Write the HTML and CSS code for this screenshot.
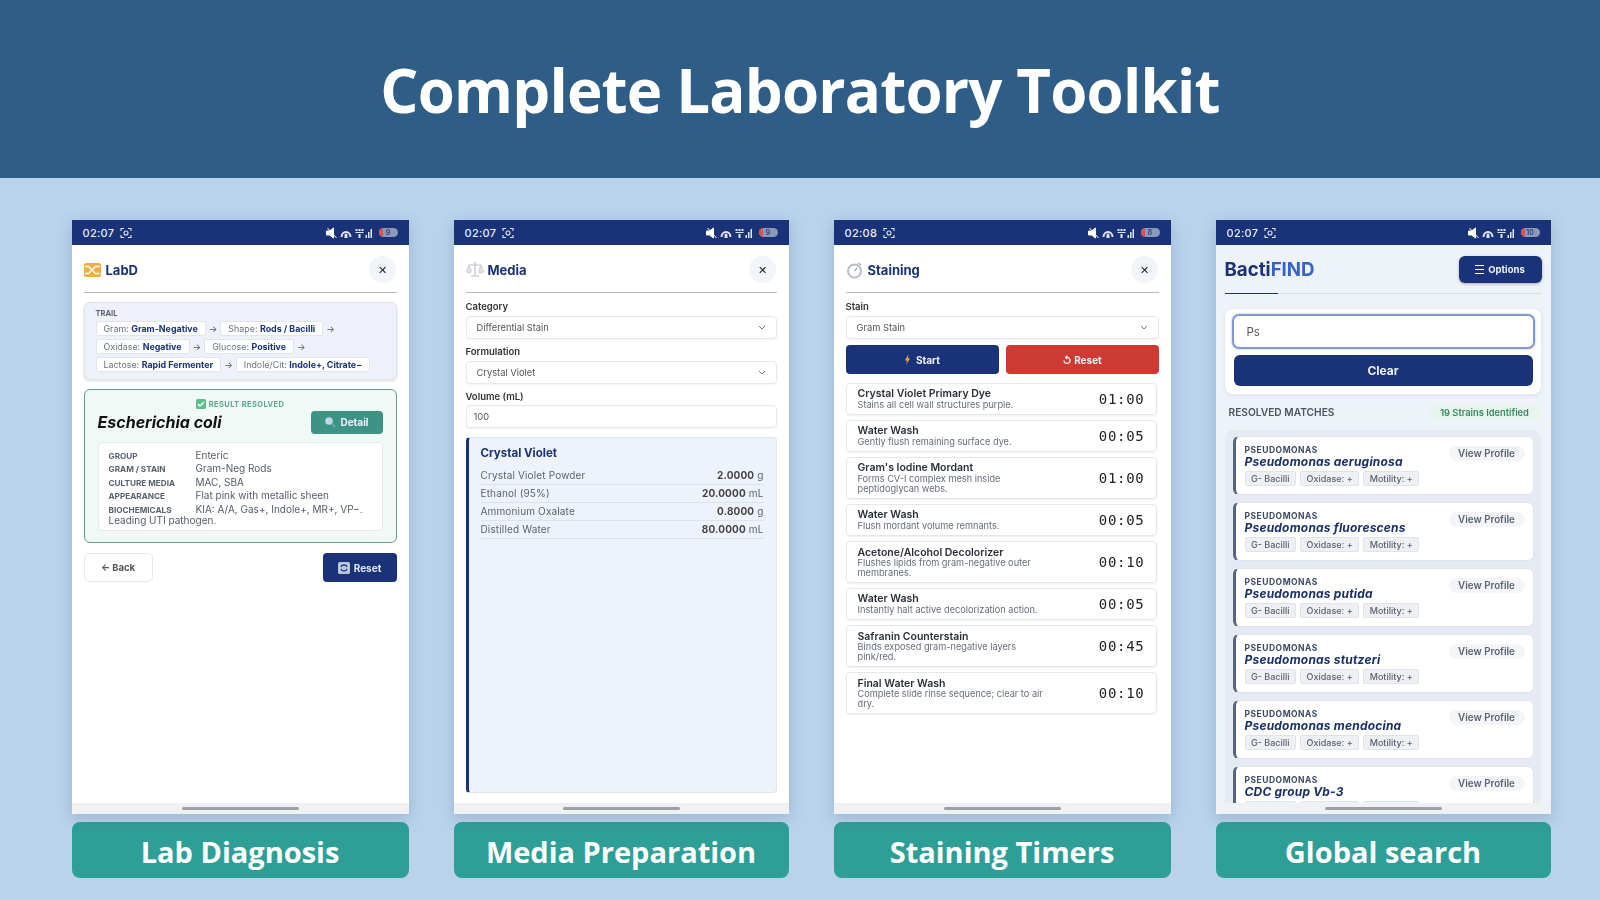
FILE: index.html
```html
<!DOCTYPE html>
<html>
<head>
  <meta charset="utf-8">
  <title>Complete Laboratory Toolkit</title>
  <link rel="stylesheet" href="styles.css">
</head>
<body>

<svg class="defs" width="0" height="0">
  <symbol id="status-icons" viewBox="0 0 50 12">
    <path d="M1 4h3l4-3v10l-4-3H1z M2 1l9 10" fill="#fff" stroke="#fff" stroke-width="1"/>
    <path d="M15 10a5.500 6 0 0 1 11 0h-2a3.500 4 0 0 0-7 0z M19 8a1.500 1.500 0 0 1 3 0v3h-3z" fill="#dfe5f3"/>
    <path d="M30 2h2v2h-2z M33 2h2v2h-2z M36 2h2v2h-2z M30 5h8v1h-8z M33 7h2v4h-2z" fill="#dfe5f3"/>
    <path d="M40 8h1.500v3H40z M42.500 5H44v6h-1.500z M45 2h1.500v9H45z" fill="#dfe5f3"/>
  </symbol>
  <symbol id="capture" viewBox="0 0 12 12">
    <path d="M1 4V1.500h3 M8 1.500h3V4 M11 8v2.500H8 M4 10.500H1V8" fill="none" stroke="#dfe5f3" stroke-width="1.100"/>
    <circle cx="6" cy="6" r="2" fill="none" stroke="#dfe5f3" stroke-width="1.100"/>
  </symbol>
</svg>

<header class="banner">
  <h1>Complete Laboratory Toolkit</h1>
</header>

<main class="toolkit">

  <!-- lab diagnosis -->
  <section class="tool">
    <div class="phone">
      <div class="statusBar">
        <span class="clock">02:07</span>
        <svg class="capture"><use href="#capture"/></svg>
        <svg class="statusIcons"><use href="#status-icons"/></svg>
        <span class="battery"><i class="batteryLow"></i>9</span>
      </div>
      <div class="screen">
        <div class="screenHead">
          <svg class="headIcon" viewBox="0 0 18 18">
            <rect y="2" width="17" height="14" rx="2" fill="#f0ae4b"/>
            <path d="M1 5.500h3.500l7 7h4 M1 12.500h3.500l7-7h4" fill="none" stroke="#fff" stroke-width="1.300"/>
          </svg>
          <h2>LabD</h2>
          <span class="closeBtn">✕</span>
        </div>

        <div class="trail">
          <div class="trailTitle">TRAIL</div>
          <div class="trailRow">
            <span class="crumb">Gram: <b>Gram-Negative</b></span><span class="arrow">→</span>
            <span class="crumb">Shape: <b>Rods / Bacilli</b></span><span class="arrow">→</span>
          </div>
          <div class="trailRow">
            <span class="crumb">Oxidase: <b>Negative</b></span><span class="arrow">→</span>
            <span class="crumb">Glucose: <b>Positive</b></span><span class="arrow">→</span>
          </div>
          <div class="trailRow">
            <span class="crumb">Lactose: <b>Rapid Fermenter</b></span><span class="arrow">→</span>
            <span class="crumb">Indole/Cit: <b>Indole+, Citrate−</b></span>
          </div>
        </div>

        <div class="result">
          <div class="resultTag">
            <svg viewBox="0 0 10 10" width="10" height="10">
              <rect width="10" height="10" rx="1.500" fill="#5fbf8a"/>
              <path d="M2 5l2 2 4-4" fill="none" stroke="#fff" stroke-width="1.400"/>
            </svg>
            RESULT RESOLVED
          </div>
          <div class="resultHead">
            <em>Escherichia coli</em>
            <span class="detailBtn">
              <svg viewBox="0 0 12 12" width="12" height="12">
                <circle cx="5" cy="5" r="3.800" fill="#bcd9e8"/>
                <path d="M8 8l3 3" stroke="#8aa" stroke-width="1.600"/>
              </svg>
              Detail
            </span>
          </div>
          <div class="facts">
            <div class="fact"><span class="factKey">GROUP</span>Enteric</div>
            <div class="fact"><span class="factKey">GRAM / STAIN</span>Gram-Neg Rods</div>
            <div class="fact"><span class="factKey">CULTURE MEDIA</span>MAC, SBA</div>
            <div class="fact"><span class="factKey">APPEARANCE</span>Flat pink with metallic sheen</div>
            <div class="fact"><span class="factKey">BIOCHEMICALS</span>KIA: A/A, Gas+, Indole+, MR+, VP−.</div>
            <div class="factNote">Leading UTI pathogen.</div>
          </div>
        </div>

        <div class="navRow">
          <span class="backBtn">← Back</span>
          <span class="resetBtn">
            <svg viewBox="0 0 12 12" width="12" height="12">
              <rect width="12" height="12" rx="1.500" fill="#b9c6dc"/>
              <path d="M3 5a3.200 3.200 0 0 1 6 0 M9 7a3.200 3.200 0 0 1-6 0" fill="none" stroke="#1a3278" stroke-width="1.200"/>
            </svg>
            Reset
          </span>
        </div>
      </div>
      <div class="homeBar"><i></i></div>
    </div>
    <div class="label">Lab Diagnosis</div>
  </section>

  <!-- media preparation -->
  <section class="tool">
    <div class="phone">
      <div class="statusBar">
        <span class="clock">02:07</span>
        <svg class="capture"><use href="#capture"/></svg>
        <svg class="statusIcons"><use href="#status-icons"/></svg>
        <span class="battery"><i class="batteryLow"></i>9</span>
      </div>
      <div class="screen">
        <div class="screenHead">
          <svg class="headIcon" viewBox="0 0 18 18">
            <path d="M9 1v13 M3 4h12 M5 15h8" fill="none" stroke="#b9bdc4" stroke-width="1.200"/>
            <path d="M0.500 10l2.500-6 2.500 6a2.500 2 0 0 1-5 0z M12.500 10l2.500-6 2.500 6a2.500 2 0 0 1-5 0z" fill="#dfe1e5" stroke="#b9bdc4" stroke-width="0.600"/>
          </svg>
          <h2>Media</h2>
          <span class="closeBtn">✕</span>
        </div>

        <div class="fieldLabel">Category</div>
        <div class="select">Differential Stain<svg class="chevron" viewBox="0 0 8 5"><path d="M1 1l3 3 3-3" fill="none" stroke="#667" stroke-width="0.900"/></svg></div>
        <div class="fieldLabel">Formulation</div>
        <div class="select">Crystal Violet<svg class="chevron" viewBox="0 0 8 5"><path d="M1 1l3 3 3-3" fill="none" stroke="#667" stroke-width="0.900"/></svg></div>
        <div class="fieldLabel">Volume (mL)</div>
        <div class="select selectPlain">100</div>

        <div class="recipe">
          <h3>Crystal Violet</h3>
          <div class="recipeRow"><span>Crystal Violet Powder</span><span><b>2.0000</b> g</span></div>
          <div class="recipeRow"><span>Ethanol (95%)</span><span><b>20.0000</b> mL</span></div>
          <div class="recipeRow"><span>Ammonium Oxalate</span><span><b>0.8000</b> g</span></div>
          <div class="recipeRow"><span>Distilled Water</span><span><b>80.0000</b> mL</span></div>
        </div>
      </div>
      <div class="homeBar"><i></i></div>
    </div>
    <div class="label">Media Preparation</div>
  </section>

  <!-- staining timers -->
  <section class="tool">
    <div class="phone">
      <div class="statusBar">
        <span class="clock">02:08</span>
        <svg class="capture"><use href="#capture"/></svg>
        <svg class="statusIcons"><use href="#status-icons"/></svg>
        <span class="battery"><i class="batteryLow"></i>8</span>
      </div>
      <div class="screen">
        <div class="screenHead">
          <svg class="headIcon" viewBox="0 0 18 18">
            <circle cx="8.500" cy="10" r="6.500" fill="#fff" stroke="#b9bdc4" stroke-width="2"/>
            <path d="M8.500 10l2.500-3 M12 2l3 2" fill="none" stroke="#a3a7ae" stroke-width="1.200"/>
          </svg>
          <h2>Staining</h2>
          <span class="closeBtn">✕</span>
        </div>

        <div class="fieldLabel">Stain</div>
        <div class="select">Gram Stain<svg class="chevron" viewBox="0 0 8 5"><path d="M1 1l3 3 3-3" fill="none" stroke="#667" stroke-width="0.900"/></svg></div>

        <div class="timerBtns">
          <span class="startBtn"><svg viewBox="0 0 8 12" width="7" height="11"><path d="M5 0L1 7h2.500L2.500 12 7 4.500H4.500z" fill="#e2a93f"/></svg> Start</span>
          <span class="stopBtn">↺ Reset</span>
        </div>

        <div class="steps">
          <div class="step">
            <div class="stepText"><b>Crystal Violet Primary Dye</b><span>Stains all cell wall structures purple.</span></div>
            <span class="timer">01:00</span>
          </div>
          <div class="step">
            <div class="stepText"><b>Water Wash</b><span>Gently flush remaining surface dye.</span></div>
            <span class="timer">00:05</span>
          </div>
          <div class="step">
            <div class="stepText"><b>Gram's Iodine Mordant</b><span>Forms CV-I complex mesh inside peptidoglycan webs.</span></div>
            <span class="timer">01:00</span>
          </div>
          <div class="step">
            <div class="stepText"><b>Water Wash</b><span>Flush mordant volume remnants.</span></div>
            <span class="timer">00:05</span>
          </div>
          <div class="step">
            <div class="stepText"><b>Acetone/Alcohol Decolorizer</b><span>Flushes lipids from gram-negative outer membranes.</span></div>
            <span class="timer">00:10</span>
          </div>
          <div class="step">
            <div class="stepText"><b>Water Wash</b><span>Instantly halt active decolorization action.</span></div>
            <span class="timer">00:05</span>
          </div>
          <div class="step">
            <div class="stepText"><b>Safranin Counterstain</b><span>Binds exposed gram-negative layers pink/red.</span></div>
            <span class="timer">00:45</span>
          </div>
          <div class="step">
            <div class="stepText"><b>Final Water Wash</b><span>Complete slide rinse sequence; clear to air dry.</span></div>
            <span class="timer">00:10</span>
          </div>
        </div>
      </div>
      <div class="homeBar"><i></i></div>
    </div>
    <div class="label">Staining Timers</div>
  </section>

  <!-- global search -->
  <section class="tool">
    <div class="phone">
      <div class="statusBar">
        <span class="clock">02:07</span>
        <svg class="capture"><use href="#capture"/></svg>
        <svg class="statusIcons"><use href="#status-icons"/></svg>
        <span class="battery"><i class="batteryLow"></i>10</span>
      </div>
      <div class="screen screenSearch">
        <div class="searchHead">
          <div class="brand">Bacti<span>FIND</span></div>
          <span class="optionsBtn"><span class="burger"></span>Options</span>
        </div>

        <div class="searchCard">
          <div class="searchInput">Ps</div>
          <div class="clearBtn">Clear</div>
        </div>

        <div class="matchHead">
          <span class="matchTitle">RESOLVED MATCHES</span>
          <span class="matchCount">19 Strains Identified</span>
        </div>

        <div class="matches">
          <div class="match">
            <div class="matchGroup">PSEUDOMONAS</div>
            <div class="matchName">Pseudomonas aeruginosa</div>
            <div class="tags"><span>G- Bacilli</span><span>Oxidase: +</span><span>Motility: +</span></div>
            <span class="profileBtn">View Profile</span>
          </div>
          <div class="match">
            <div class="matchGroup">PSEUDOMONAS</div>
            <div class="matchName">Pseudomonas fluorescens</div>
            <div class="tags"><span>G- Bacilli</span><span>Oxidase: +</span><span>Motility: +</span></div>
            <span class="profileBtn">View Profile</span>
          </div>
          <div class="match">
            <div class="matchGroup">PSEUDOMONAS</div>
            <div class="matchName">Pseudomonas putida</div>
            <div class="tags"><span>G- Bacilli</span><span>Oxidase: +</span><span>Motility: +</span></div>
            <span class="profileBtn">View Profile</span>
          </div>
          <div class="match">
            <div class="matchGroup">PSEUDOMONAS</div>
            <div class="matchName">Pseudomonas stutzeri</div>
            <div class="tags"><span>G- Bacilli</span><span>Oxidase: +</span><span>Motility: +</span></div>
            <span class="profileBtn">View Profile</span>
          </div>
          <div class="match">
            <div class="matchGroup">PSEUDOMONAS</div>
            <div class="matchName">Pseudomonas mendocina</div>
            <div class="tags"><span>G- Bacilli</span><span>Oxidase: +</span><span>Motility: +</span></div>
            <span class="profileBtn">View Profile</span>
          </div>
          <div class="match">
            <div class="matchGroup">PSEUDOMONAS</div>
            <div class="matchName">CDC group Vb-3</div>
            <div class="tags"><span>G- Bacilli</span><span>Oxidase: +</span><span>Motility: +</span></div>
            <span class="profileBtn">View Profile</span>
          </div>
        </div>
      </div>
      <div class="homeBar"><i></i></div>
    </div>
    <div class="label">Global search</div>
  </section>

</main>
</body>
</html>
```

FILE: styles.css
```css
html, body {margin:0;padding:0;}
body {width:1600px;height:900px;overflow:hidden;background:#b9d3eb;font-family:"Inter","Liberation Sans",sans-serif;color:#1f2937;}
.defs {display:block;height:0;}

.banner {height:178px;box-sizing:border-box;padding-top:1px;background:#2e5d87;display:flex;align-items:center;justify-content:center;}
.banner h1 {margin:0;font-family:"Open Sans",sans-serif;font-weight:700;font-size:60px;letter-spacing:-.8px;color:#fff;}

.toolkit {display:grid;grid-template-columns:337px 335px 337px 335px;column-gap:45px;padding:42px 0 0 71.500px;}
.tool {display:flex;flex-direction:column;gap:8px;}
.label {height:56px;box-sizing:border-box;padding-top:3px;border-radius:8px;background:#2e9f97;color:#fff;font-family:"Open Sans",sans-serif;font-weight:700;font-size:29px;display:flex;align-items:center;justify-content:center;}

.phone {height:594px;display:flex;flex-direction:column;background:#fff;box-shadow:0 4px 14px rgba(60,90,130,.25);overflow:hidden;filter:blur(.35px);}
.statusBar {height:25px;flex:none;background:#1a3278;color:#e8ecf6;display:flex;align-items:center;padding:0 11px 0 11px;font-size:11px;font-weight:500;}
.clock {letter-spacing:.3px;}
.capture {width:12px;height:12px;margin-left:6px;}
.statusIcons {width:51px;height:12px;margin-left:auto;}
.battery {width:19px;height:9px;margin-left:3px;border-radius:5px;background:#8d99b8;color:#1a3278;font-size:7px;line-height:9px;text-align:center;position:relative;overflow:hidden;}
.batteryLow {position:absolute;left:0;top:0;width:4px;height:9px;background:#d9534f;}

.screen {flex:1;min-height:0;padding:0 12px;display:flex;flex-direction:column;overflow:hidden;}
.screenHead {height:48px;box-sizing:border-box;padding-top:2px;flex:none;display:flex;align-items:center;gap:4px;border-bottom:1px solid #b6bac2;margin-bottom:8px;}
.screenHead h2 {margin:0;font-size:13px;font-weight:700;color:#1a3278;}
.headIcon {width:18px;height:18px;}
.closeBtn {margin-left:auto;margin-right:1px;width:27px;height:27px;border-radius:50%;background:#f1f4f8;color:#222;font-size:11px;display:flex;align-items:center;justify-content:center;}

.trail {height:78px;box-sizing:border-box;background:#eef1f9;border:1px solid #dfe3ec;border-radius:6px;box-shadow:0 1px 3px rgba(0,0,0,.15);padding:6px 11px;font-size:8.900px;margin:1px 0 9px;}
.trailTitle {font-size:7.500px;font-weight:700;color:#5a6475;line-height:10px;}
.trailRow {display:flex;align-items:center;gap:3px;height:18.300px;}
.crumb {background:#fff;border:1px solid #e2e5ec;border-radius:2px;padding:0 7px;height:13px;line-height:13px;color:#6b7280;white-space:nowrap;}
.crumb b {color:#1a3278;font-weight:700;}
.arrow {color:#555;font-size:9px;}

.result {height:154px;box-sizing:border-box;background:#f0f9f6;border:1.500px solid #5f9f8c;border-radius:6px;padding:8px 13px 0;margin-bottom:10px;}
.resultTag {display:flex;align-items:center;justify-content:center;gap:3px;font-size:7.500px;font-weight:700;color:#5ca98b;letter-spacing:.4px;height:12px;}
.resultHead {display:flex;align-items:center;justify-content:space-between;height:24px;}
.resultHead em {font-size:16px;font-weight:700;color:#111;}
.detailBtn {width:72px;height:23px;border-radius:4px;background:#3d9485;color:#eef;font-size:10px;font-weight:700;display:flex;align-items:center;justify-content:center;gap:4px;}
.facts {margin-top:8px;height:89px;box-sizing:border-box;background:#fff;border:1px solid #e6e9ee;border-radius:4px;padding:6px 10px;font-size:10px;color:#555c68;}
.fact {height:13.400px;line-height:13.400px;white-space:nowrap;}
.factKey {display:inline-block;width:87px;font-size:8.200px;font-weight:700;color:#596170;}
.factNote {line-height:10px;margin-top:-1px;}

.navRow {display:flex;justify-content:space-between;}
.backBtn {width:69px;height:29px;box-sizing:border-box;border:1px solid #e4e7ec;border-radius:5px;background:#fff;color:#555;font-size:9.500px;font-weight:700;display:flex;align-items:center;justify-content:center;}
.resetBtn {width:74px;height:29px;border-radius:4px;background:#1a3278;color:#dfe5f3;font-size:10px;font-weight:700;display:flex;align-items:center;justify-content:center;gap:4px;}

.fieldLabel {font-size:9.500px;font-weight:600;color:#333;height:12px;line-height:12px;margin:0 0 3px;}
.select {height:23px;box-sizing:border-box;flex:none;border:1px solid #e4e7ec;border-radius:4px;background:#fff;padding:0 10px;font-size:9.300px;color:#555;display:flex;align-items:center;justify-content:space-between;margin-bottom:7px;box-shadow:0 1px 2px rgba(0,0,0,.05);}
.selectPlain {padding:0 7px;margin-top:-1px;}
.chevron {width:8px;height:5px;}

.recipe {flex:1;margin:2px 0 10px;background:#eef2fb;border:1px solid #dfe3ec;border-left:3px solid #1a3278;border-radius:4px;padding:7px 12px 0 12px;}
.recipe h3 {margin:0 0 6px;font-size:11.500px;font-weight:700;color:#1a3278;height:16px;line-height:16px;}
.recipeRow {display:flex;justify-content:space-between;height:18px;box-sizing:border-box;line-height:17px;border-bottom:1px solid #dde2ec;font-size:10px;letter-spacing:.15px;color:#5b6472;}
.recipeRow b {color:#444;font-weight:700;}

.timerBtns {display:flex;gap:7px;margin:-1px 0 8.500px;flex:none;}
.startBtn, .stopBtn {flex:1;height:29px;border-radius:4px;color:#eef1f8;font-size:10px;font-weight:700;display:flex;align-items:center;justify-content:center;gap:5px;}
.startBtn {background:#1a3278;}
.stopBtn {background:#cc3a31;}

.steps {display:flex;flex-direction:column;gap:5px;margin-right:2px;}
.step {min-height:32px;box-sizing:border-box;display:flex;align-items:center;justify-content:space-between;border:1px solid #e4e7ec;border-radius:4px;padding:4.500px 11px;box-shadow:0 1px 2px rgba(0,0,0,.06);}
.stepText {width:192px;}
.stepText b {display:block;font-size:10.500px;font-weight:600;color:#2a2f38;line-height:11.500px;white-space:nowrap;}
.stepText span {display:block;font-size:9.200px;color:#666d78;line-height:9.700px;}
.timer {font-family:"DejaVu Sans Mono",monospace;font-size:14px;color:#222;letter-spacing:.7px;}

.screenSearch {background:#eef2f9;padding:0 9px;}
.searchHead {height:48px;flex:none;display:flex;align-items:center;justify-content:space-between;border-bottom:1px solid #d6deec;position:relative;margin-bottom:15px;}
.searchHead::after {content:"";position:absolute;left:0;bottom:-1px;width:53px;height:1px;background:#1a3278;}
.brand {font-size:18.700px;font-weight:700;color:#1a3278;}
.brand span {color:#3563c9;}
.optionsBtn {width:83px;height:27px;border-radius:6px;background:#1a3278;color:#eef1f8;font-size:9.500px;font-weight:700;display:flex;align-items:center;justify-content:center;gap:4px;box-shadow:0 1px 3px rgba(0,0,0,.3);}
.burger {width:9px;height:7px;border-top:1px solid #fff;border-bottom:1px solid #fff;position:relative;}
.burger::before {content:"";position:absolute;left:0;right:0;top:3px;height:1px;background:#fff;}
.searchCard {height:85px;flex:none;box-sizing:border-box;background:#fff;border-radius:8px;padding:5px 6px 5px 7px;margin-right:1px;box-shadow:0 1px 4px rgba(80,100,140,.12);}
.searchInput {height:35px;box-sizing:border-box;border:2px solid #7f98d4;border-radius:7px;padding:0 13px;font-size:11.500px;color:#555;display:flex;align-items:center;box-shadow:0 0 2px rgba(60,90,180,.5);}
.clearBtn {height:31px;margin:6px 2px 0 2px;border-radius:6px;background:#1a3278;color:#eef1f8;font-size:12px;font-weight:700;display:flex;align-items:center;justify-content:center;}
.matchHead {flex:none;display:flex;align-items:center;justify-content:space-between;height:16px;margin:10px 2px 10px 4px;}
.matchTitle {font-size:10.200px;font-weight:600;color:#4b5563;}
.matchCount {width:110px;height:15px;background:#e6f6ec;border-radius:3px;font-size:9.300px;font-weight:600;color:#3b8a5f;display:flex;align-items:center;justify-content:center;}
.matches {flex:1;min-height:0;overflow:hidden;background:#e6eaf4;border-radius:8px 8px 0 0;padding:6px 7px 0 8px;display:flex;flex-direction:column;gap:7.500px;margin-right:1px;}
.match {flex:none;height:58.500px;box-sizing:border-box;position:relative;background:#fff;border:1px solid #dfe3ec;border-left:3.500px solid #56657e;border-radius:6px;padding:9px 9px 0 9px;}
.matchGroup {font-size:8.500px;font-weight:700;color:#3d4a63;letter-spacing:.5px;line-height:9px;}
.matchName {font-size:12px;font-weight:700;font-style:italic;letter-spacing:.2px;color:#1a2f6b;line-height:13px;}
.tags {display:flex;gap:4px;margin-top:3px;}
.tags span {height:13px;line-height:13px;padding:0 5.500px;background:#eef0f4;border:1px solid #e0e3e9;border-radius:2px;font-size:9px;font-weight:500;color:#5a6372;white-space:nowrap;}
.profileBtn {position:absolute;top:9px;right:8px;width:76px;height:15px;line-height:15px;text-align:center;background:#f3f5f9;border-radius:8px;font-size:9.800px;font-weight:600;color:#5a6372;}

.homeBar {height:11px;flex:none;background:#f0f1f3;position:relative;}
.homeBar i {position:absolute;left:50%;top:4px;width:117px;height:2.500px;margin-left:-58px;border-radius:2px;background:#9b9fa6;}
```
